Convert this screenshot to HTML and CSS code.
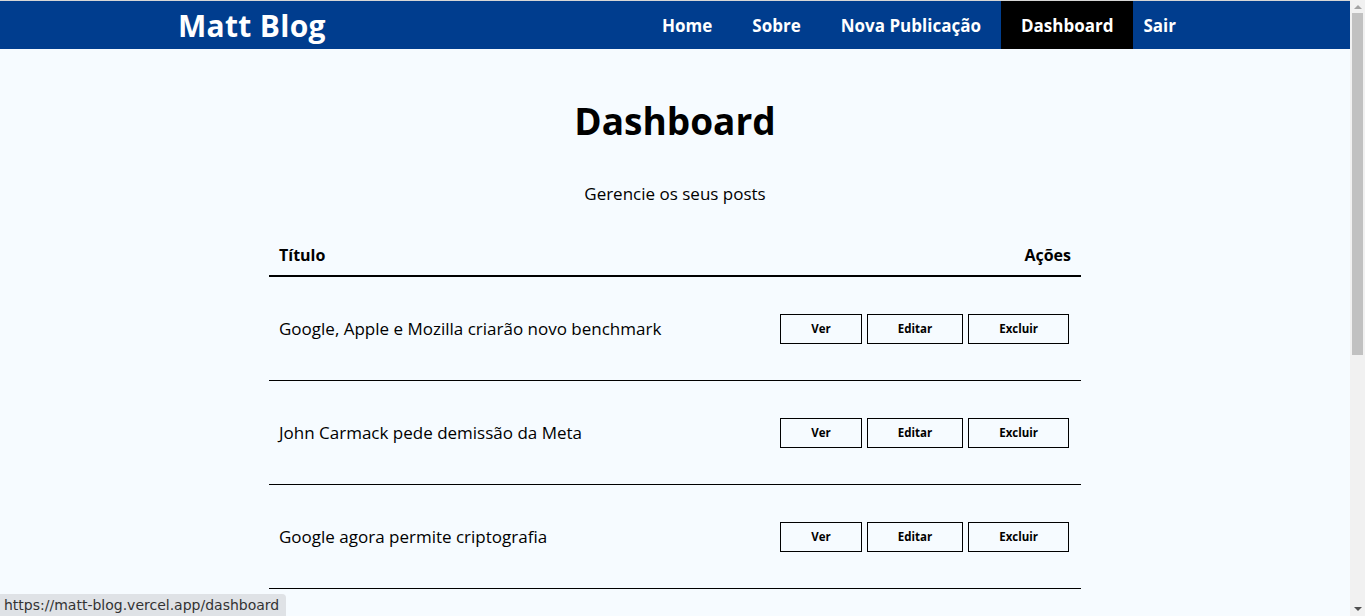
FILE: index.html
```html
<!DOCTYPE html>
<html lang="pt-BR">
<head>
<meta charset="utf-8">
<title>Matt Blog - Dashboard</title>
<link rel="stylesheet" href="styles.css">
</head>
<body>
<header class="navbar">
  <a class="brand" href="#">Matt Blog</a>
  <nav class="nav-links">
    <a href="#">Home</a>
    <a href="#">Sobre</a>
    <a href="#">Nova Publicação</a>
    <a href="#" class="active">Dashboard</a>
    <button class="logout">Sair</button>
  </nav>
</header>
<main class="dashboard">
  <h1>Dashboard</h1>
  <p class="subtitle">Gerencie os seus posts</p>
  <div class="post-table">
    <div class="row head">
      <span>Título</span>
      <span>Ações</span>
    </div>
    <div class="row">
      <p class="title">Google, Apple e Mozilla criarão novo benchmark</p>
      <div class="actions"><a class="btn" href="#">Ver</a><a class="btn" href="#">Editar</a><button class="btn">Excluir</button></div>
    </div>
    <div class="row">
      <p class="title">John Carmack pede demissão da Meta</p>
      <div class="actions"><a class="btn" href="#">Ver</a><a class="btn" href="#">Editar</a><button class="btn">Excluir</button></div>
    </div>
    <div class="row">
      <p class="title">Google agora permite criptografia</p>
      <div class="actions"><a class="btn" href="#">Ver</a><a class="btn" href="#">Editar</a><button class="btn">Excluir</button></div>
    </div>
  </div>
</main>
<div class="scrollbar" aria-hidden="true">
  <span class="arrow up"></span>
  <span class="thumb"></span>
  <span class="arrow down"></span>
</div>
<div class="status-url">https://matt-blog.vercel.app/dashboard</div>
</body>
</html>
```
FILE: styles.css
```css
* { box-sizing: border-box; }
html, body { margin: 0; padding: 0; }
body {
  background: #f6fbff;
  font-family: "Open Sans", "Liberation Sans", sans-serif;
  color: #000;
  border-top: 1px solid #d6d6d6;
  margin-right: 15px;
}
a { color: inherit; text-decoration: none; }

.navbar {
  display: flex;
  align-items: center;
  justify-content: space-between;
  height: 48px;
  background: #003d8e;
  padding: 0 164px 0 178px;
}
.brand {
  color: #fff;
  font-weight: 700;
  font-size: 30px;
  letter-spacing: 0.3px;
}
.nav-links {
  display: flex;
  align-items: stretch;
  height: 100%;
}
.nav-links a, .logout {
  display: flex;
  align-items: center;
  color: #fff;
  font-weight: 700;
  font-size: 17px;
  padding: 0 20px;
}
.nav-links a.active { background: #000; }
.logout {
  background: none;
  border: none;
  font-family: inherit;
  padding: 0 10px;
  cursor: pointer;
}

.dashboard {
  display: flex;
  flex-direction: column;
  align-items: center;
  padding-bottom: 40px;
}
.dashboard h1 {
  margin: 50px 0 0;
  font-size: 37px;
  font-weight: 700;
  line-height: 44px;
}
.subtitle {
  margin: 39px 0 0;
  font-size: 17px;
  line-height: 24px;
}
.post-table {
  width: 812px;
  margin-top: 29px;
}
.row {
  display: flex;
  align-items: center;
  justify-content: space-between;
  border-bottom: 1px solid #000;
  height: 104px;
  padding: 0 12px 0 10px;
}
.row.head {
  height: 42px;
  border-bottom: 2px solid #000;
  font-weight: 700;
  font-size: 16px;
  padding: 0 10px;
}
.title {
  margin: 0;
  font-size: 17px;
}
.actions {
  display: flex;
  gap: 5px;
}
.btn {
  display: flex;
  align-items: center;
  justify-content: center;
  height: 30px;
  padding: 0 30px;
  border: 1.5px solid #000;
  background: transparent;
  font-family: inherit;
  font-weight: 700;
  font-size: 11.5px;
  color: #000;
  cursor: pointer;
}

.scrollbar {
  position: fixed;
  top: 0;
  right: 0;
  width: 15px;
  height: 100%;
  background: #f1f1f1;
  display: flex;
  flex-direction: column;
  align-items: center;
}
.arrow {
  width: 0;
  height: 0;
  border-left: 4px solid transparent;
  border-right: 4px solid transparent;
}
.arrow.up {
  margin-top: 5px;
  border-bottom: 4px solid #a3a3a3;
}
.arrow.down {
  margin-top: auto;
  margin-bottom: 5px;
  border-top: 4px solid #505050;
}
.thumb {
  margin-top: 4px;
  width: 11px;
  height: 342px;
  background: #c1c1c1;
}

.status-url {
  position: fixed;
  left: 0;
  bottom: 0;
  height: 22px;
  padding: 0 7px 0 4px;
  display: flex;
  align-items: center;
  background: #dfe2e6;
  border-top-right-radius: 4px;
  font-family: "DejaVu Sans", sans-serif;
  font-size: 14px;
  color: #333;
}
```
